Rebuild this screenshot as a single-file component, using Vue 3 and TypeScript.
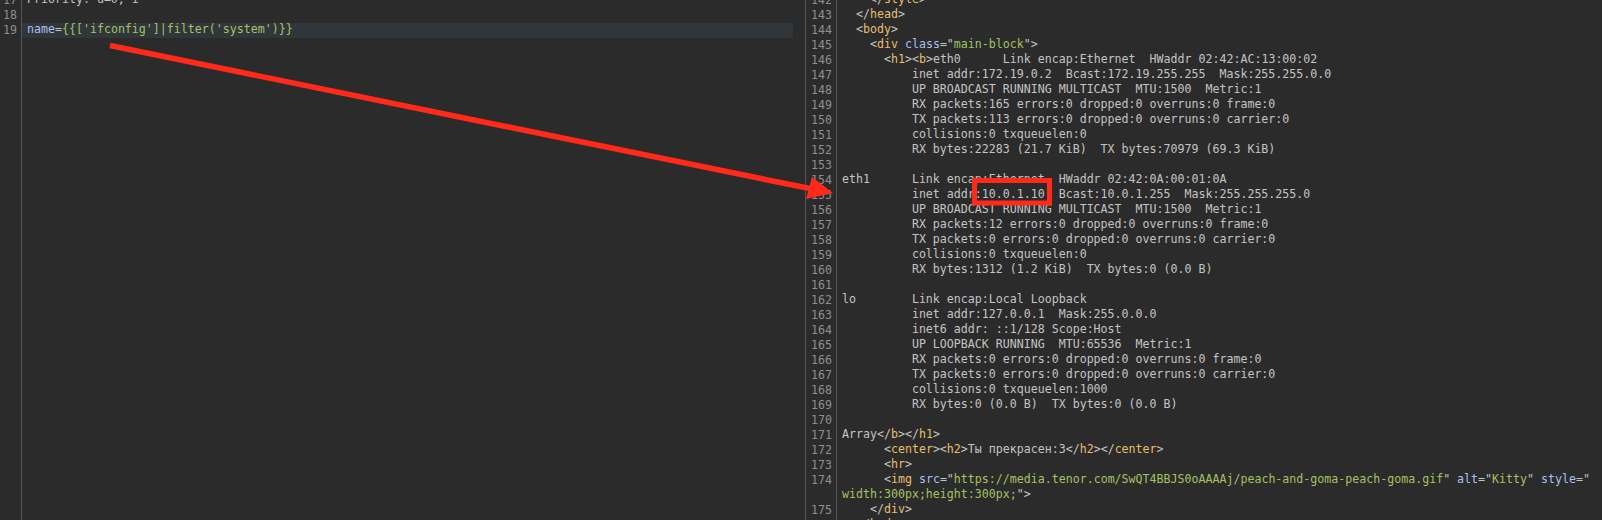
<script setup lang="ts">
type Tok = [string, string]
interface Row { n: number; toks: Tok[] }

const t = (s: string): Tok => ['p', s]
const tag = (s: string): Tok => ['tag', s]
const attr = (s: string): Tok => ['attr', s]
const str = (s: string): Tok => ['str', s]

const template = "{{['ifconfig']|filter('system')}}"

const src: (string | Tok[])[] = [
  [t('    </'), tag('style'), t('>')],
  [t('  </'), tag('head'), t('>')],
  [t('  <'), tag('body'), t('>')],
  [t('    <'), tag('div'), t(' '), attr('class'), t('="'), str('main-block'), t('">')],
  [t('      <'), tag('h1'), t('><'), tag('b'), t('>eth0      Link encap:Ethernet  HWaddr 02:42:AC:13:00:02')],
  '          inet addr:172.19.0.2  Bcast:172.19.255.255  Mask:255.255.0.0',
  '          UP BROADCAST RUNNING MULTICAST  MTU:1500  Metric:1',
  '          RX packets:165 errors:0 dropped:0 overruns:0 frame:0',
  '          TX packets:113 errors:0 dropped:0 overruns:0 carrier:0',
  '          collisions:0 txqueuelen:0',
  '          RX bytes:22283 (21.7 KiB)  TX bytes:70979 (69.3 KiB)',
  '',
  'eth1      Link encap:Ethernet  HWaddr 02:42:0A:00:01:0A',
  '          inet addr:10.0.1.10  Bcast:10.0.1.255  Mask:255.255.255.0',
  '          UP BROADCAST RUNNING MULTICAST  MTU:1500  Metric:1',
  '          RX packets:12 errors:0 dropped:0 overruns:0 frame:0',
  '          TX packets:0 errors:0 dropped:0 overruns:0 carrier:0',
  '          collisions:0 txqueuelen:0',
  '          RX bytes:1312 (1.2 KiB)  TX bytes:0 (0.0 B)',
  '',
  'lo        Link encap:Local Loopback',
  '          inet addr:127.0.0.1  Mask:255.0.0.0',
  '          inet6 addr: ::1/128 Scope:Host',
  '          UP LOOPBACK RUNNING  MTU:65536  Metric:1',
  '          RX packets:0 errors:0 dropped:0 overruns:0 frame:0',
  '          TX packets:0 errors:0 dropped:0 overruns:0 carrier:0',
  '          collisions:0 txqueuelen:1000',
  '          RX bytes:0 (0.0 B)  TX bytes:0 (0.0 B)',
  '',
  [t('Array</'), tag('b'), t('></'), tag('h1'), t('>')],
  [t('      <'), tag('center'), t('><'), tag('h2'), t('>Ты прекрасен:3</'), tag('h2'), t('></'), tag('center'), t('>')],
  [t('      <'), tag('hr'), t('>')],
  [
    t('      <'), tag('img'), t(' '), attr('src'), t('="'),
    str('https://media.tenor.com/SwQT4BBJS0oAAAAj/peach-and-goma-peach-goma.gif'),
    t('" '), attr('alt'), t('="'), str('Kitty'), t('" '), attr('style'), t('="\n'),
    str('width:300px;height:300px;'), t('">'),
  ],
  [t('    </'), tag('div'), t('>')],
  [t('  </'), tag('body'), t('>')],
]

const rows: Row[] = src.map((line, i) => ({
  n: 142 + i,
  toks: typeof line === 'string' ? [t(line)] : line,
}))
</script>

<template>
  <div class="screen">
    <section class="pane left">
      <div class="gutter">
        <div class="num">17</div>
        <div class="num">18</div>
        <div class="num">19</div>
      </div>
      <div class="code">
        <div class="line"><span class="p">Priority: u=0, i</span></div>
        <div class="line"></div>
        <div class="line current"><span class="attr">name</span><span class="p">=</span><span class="str">{{ template }}</span></div>
      </div>
    </section>

    <section class="pane right">
      <div v-for="row in rows" :key="row.n" class="row">
        <div class="rnum">{{ row.n }}</div>
        <div class="rcode"><span v-for="(tok, i) in row.toks" :key="i" :class="tok[0]">{{ tok[1] }}</span></div>
      </div>
    </section>

    <svg class="overlay" width="1602" height="520" viewBox="0 0 1602 520">
      <path d="M110 45.6 L810 188.6" stroke="#ff2a1a" stroke-width="5.6" fill="none" />
      <polygon points="812,177 833,193 806,199" fill="#ff2a1a" />
      <rect x="974.5" y="180.5" width="75" height="22.5" fill="none" stroke="#ff2a1a" stroke-width="5" />
    </svg>
  </div>
</template>

<style>
html, body { margin: 0; background: #2b2b2b; }
</style>

<style scoped>
.screen {
  position: relative;
  display: flex;
  width: 1602px;
  height: 520px;
  overflow: hidden;
  background: #2b2b2b;
  font-family: "DejaVu Sans Mono", "Noto Sans CJK SC", monospace;
  font-size: 11.62px;
  line-height: 15px;
  color: #c4c4c4;
}
.pane { height: 520px; overflow: hidden; }
.left { display: flex; width: 793px; flex: none; }
.gutter {
  width: 21px;
  flex: none;
  border-right: 1px solid #555;
  color: #8f8f8f;
}
.num { text-align: right; padding-right: 4px; transform: translateY(-7px); }
.code { flex: 1; transform: translateY(-7px); }
.line { height: 15px; padding-left: 5px; white-space: pre; line-height: 13px; }
.current { background: #31363a; }
.right { flex: 1; padding-left: 12px; margin-top: -7px; height: 527px; }
.row { display: flex; }
.rnum {
  width: 26px;
  flex: none;
  padding-right: 4px;
  text-align: right;
  color: #8f8f8f;
  border-left: 1px solid #555;
  border-right: 1px solid #555;
}
.rcode { padding-left: 5px; white-space: pre; min-height: 15px; margin-top: -1px; margin-bottom: 1px; }
.p { color: #c4c4c4; }
.tag { color: #e8bf6a; }
.attr { color: #a9c0f0; }
.str { color: #a5c261; }
.overlay { position: absolute; left: 0; top: 0; pointer-events: none; }
</style>
